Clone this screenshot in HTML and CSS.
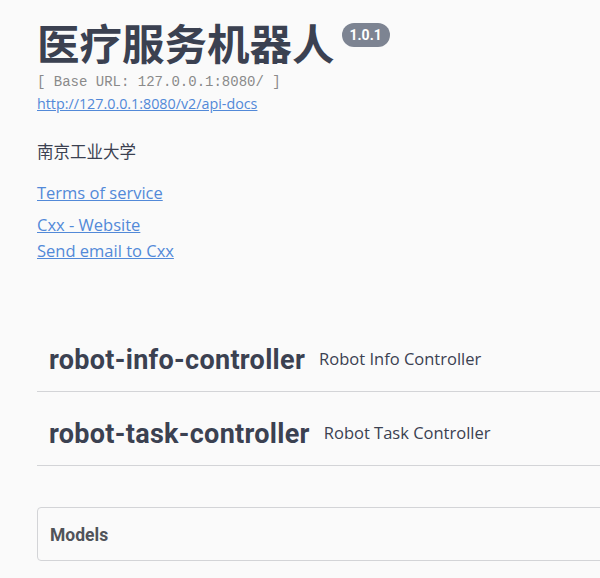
FILE: index.html
```html
<!DOCTYPE html>
<html lang="zh">
<head>
<meta charset="utf-8">
<title>医疗服务机器人</title>
<link rel="stylesheet" href="styles.css">
</head>
<body>
<div class="wrapper">
  <section class="info">
    <h2 class="title">医疗服务机器人 <span class="version">1.0.1</span></h2>
    <pre class="base-url">[ Base URL: 127.0.0.1:8080/ ]</pre>
    <a class="spec-link" href="#">http://127.0.0.1:8080/v2/api-docs</a>
    <p class="desc">南京工业大学</p>
    <a class="terms" href="#">Terms of service</a>
    <div class="contact">
      <a href="#">Cxx - Website</a>
      <a href="#">Send email to Cxx</a>
    </div>
  </section>
  <section class="tags">
    <h4 class="tag"><span class="tag-name">robot-info-controller</span><small class="tag-desc">Robot Info Controller</small></h4>
    <h4 class="tag"><span class="tag-name">robot-task-controller</span><small class="tag-desc">Robot Task Controller</small></h4>
  </section>
  <section class="models">
    <h4 class="models-title">Models</h4>
  </section>
</div>
</body>
</html>
```
FILE: styles.css
```css
html, body {
  margin: 0;
  padding: 0;
  background: #fafafa;
  overflow: hidden;
}
.wrapper {
  padding-left: 37px;
  width: 640px;
  color: #3b4151;
  font-family: "Open Sans", "Noto Sans CJK SC", sans-serif;
}
.title {
  display: flex;
  align-items: flex-start;
  margin: 18px 0 0;
  font: 700 42.5px/48px "Noto Sans CJK SC", sans-serif;
  color: #3b4151;
}
.version {
  margin: 5px 0 0 7px;
  padding: 0 8px;
  background: #7d8492;
  color: #fff;
  border-radius: 12px;
  font: 700 14px/24px Roboto, sans-serif;
}
.base-url {
  margin: 7px 0 0;
  font: 14px/18px "Liberation Mono", monospace;
  color: #8a8a8a;
}
a {
  color: #5289d8;
  text-decoration: underline;
}
.spec-link {
  display: block;
  margin-top: 3px;
  font: 14.3px/19px "Open Sans", sans-serif;
}
.desc {
  margin: 28px 0 0;
  font: 16.5px/22px "Open Sans", "Noto Sans CJK SC", sans-serif;
  color: #3b4151;
}
.terms {
  display: block;
  margin-top: 17px;
  font: 16.5px/26px "Open Sans", sans-serif;
}
.contact {
  display: flex;
  flex-direction: column;
  align-items: flex-start;
  margin-top: 6px;
  font: 16.5px/26px "Open Sans", sans-serif;
}
.tags {
  margin-top: 60px;
}
.tag {
  display: flex;
  align-items: flex-start;
  margin: 0 0 6px;
  padding: 18px 10px 13px 12px;
  border-bottom: 1px solid #d3d4d7;
}
.tag-name {
  font: 700 27px/36px Roboto, sans-serif;
  letter-spacing: 0.3px;
  color: #3b4151;
}
.tag-desc {
  margin: 5.5px 0 0 14px;
  font: 16.5px/22px "Open Sans", sans-serif;
  color: #3b4151;
}
.models {
  margin-top: 41px;
  border: 1px solid #d3d4d7;
  border-radius: 4px;
  padding: 16px 12px 14px;
}
.models-title {
  margin: 0;
  font: 700 17.5px/22px Roboto, sans-serif;
  color: #505359;
}
```
